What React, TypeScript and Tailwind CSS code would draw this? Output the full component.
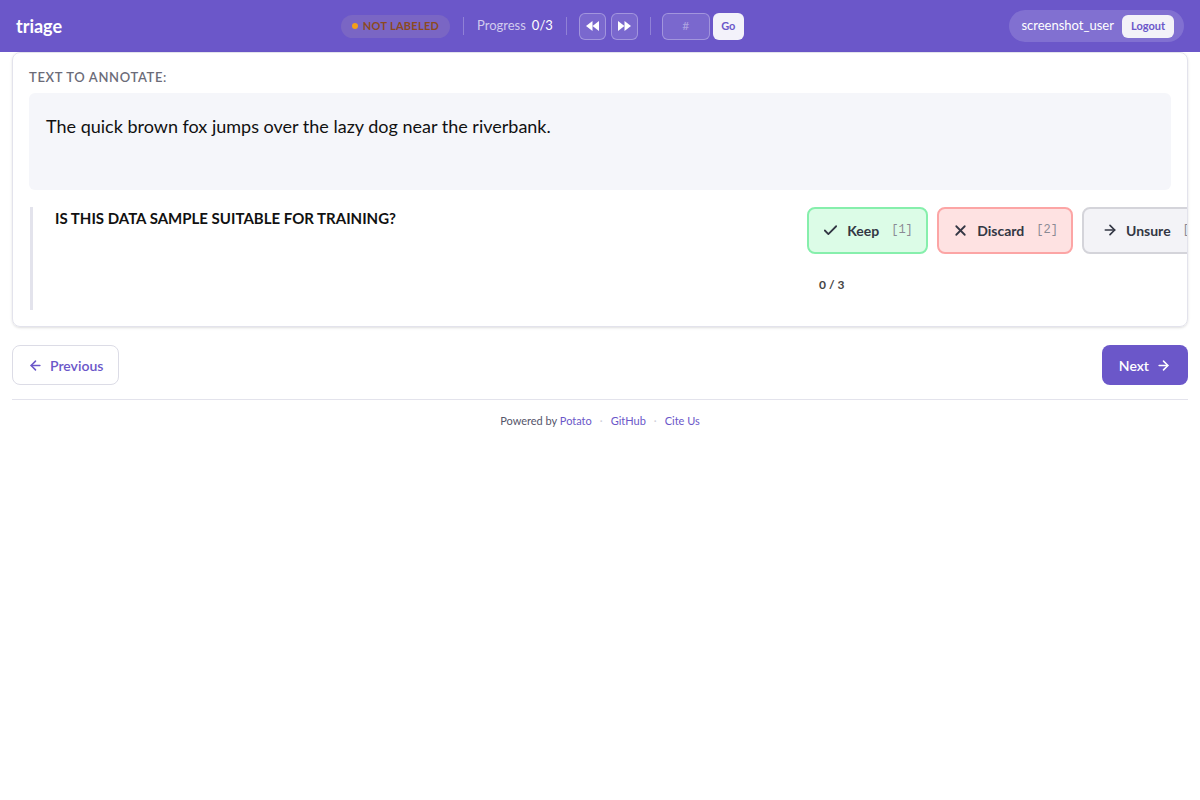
import { ArrowLeft, ArrowRight, Check, X } from "lucide-react";

const font = { fontFamily: "Lato, 'Noto Sans', sans-serif" };

// ícones de retroceder/avançar preenchidos
const Rewind = () => (
  <svg width="13" height="10" viewBox="0 0 13 10" fill="white">
    <polygon points="6.5,0 6.5,10 0,5" />
    <polygon points="13,0 13,10 6.5,5" />
  </svg>
);

const Forward = () => (
  <svg width="13" height="10" viewBox="0 0 13 10" fill="white">
    <polygon points="0,0 0,10 6.5,5" />
    <polygon points="6.5,0 6.5,10 13,5" />
  </svg>
);

const App = () => {
  return (
    <div className="min-h-[800px] bg-white text-[#1f1f2e]" style={font}>
      {/* barra superior */}
      <header className="h-[52px] bg-[#6b57c9] flex items-center px-4">
        <div className="text-white font-bold text-[18px] w-[325px]">triage</div>
        <div className="flex items-center">
          <div className="h-[23px] w-[109px] justify-center rounded-full bg-[#7a66c4] flex items-center gap-[5px]">
            <span className="w-[6px] h-[6px] rounded-full bg-[#f5a01a]" />
            <span className="text-[11px] font-bold tracking-wide text-[#8c4a1e]">NOT LABELED</span>
          </div>
          <div className="w-px h-[18px] bg-white/25 mx-[13px]" />
          <span className="text-[13px] text-white/70">Progress</span>
          <span className="text-[13px] text-white ml-[6px]">0/3</span>
          <div className="w-px h-[18px] bg-white/25 ml-[13px] mr-[12px]" />
          <button className="w-[27px] h-[27px] rounded-md border border-white/30 bg-white/10 flex items-center justify-center">
            <Rewind />
          </button>
          <button className="w-[27px] h-[27px] ml-[5px] rounded-md border border-white/30 bg-white/10 flex items-center justify-center">
            <Forward />
          </button>
          <div className="w-px h-[18px] bg-white/25 ml-[12px] mr-[11px]" />
          <div className="w-[48px] h-[27px] rounded-md border border-white/30 bg-white/10 flex items-center justify-center text-[12px] text-white/40">
            #
          </div>
          <button className="w-[31px] h-[27px] ml-[3px] rounded-md bg-[#f3f2fa] text-[#6b57c9] text-[11px] font-bold">
            Go
          </button>
        </div>
        <div className="ml-auto h-[32px] rounded-full bg-white/15 flex items-center pl-[12px] pr-[10px] gap-[8px]">
          <span className="text-white text-[13px]">screenshot_user</span>
          <button className="h-[23px] px-[9px] rounded-md bg-[#f3f2f8] text-[#6b57c9] text-[11px] font-bold">
            Logout
          </button>
        </div>
      </header>

      <main className="px-3">
        {/* cartão de anotação */}
        <div className="border border-[#e3e3ec] rounded-lg shadow-sm overflow-hidden h-[275px]">
          <div className="pt-[15px] px-[16px]">
            <div className="text-[13px] tracking-wider text-[#6b6b78] font-semibold">TEXT TO ANNOTATE:</div>
            <div className="mt-[5px] h-[97px] bg-[#f5f6fa] rounded-md px-[17px] pt-[20px] text-[18px] text-[#111]">
              The quick brown fox jumps over the lazy dog near the riverbank.
            </div>
          </div>
          <div className="mt-[17px] ml-[17px] flex">
            <div className="shrink-0 border-l-[3px] border-[#e3e3ec] h-[103px] pl-[22px] w-[777px]">
              <div className="text-[15px] font-bold text-[#111]">IS THIS DATA SAMPLE SUITABLE FOR TRAINING?</div>
            </div>
            <div className="flex flex-col shrink-0">
              <div className="flex gap-[9px] whitespace-nowrap">
                <button className="shrink-0 h-[47px] w-[121px] rounded-lg border-2 border-[#86efac] bg-[#dcfce7] flex items-center justify-center gap-[8px] text-[14px] font-bold text-[#333744]">
                  <Check size={17} strokeWidth={2.5} />
                  Keep
                  <span className="font-mono font-normal text-[12px] text-[#8a8a94] ml-[4px]">[1]</span>
                </button>
                <button className="shrink-0 h-[47px] w-[136px] rounded-lg border-2 border-[#fca5a5] bg-[#fee2e2] flex items-center justify-center gap-[8px] text-[14px] font-bold text-[#333744]">
                  <X size={17} strokeWidth={2.5} />
                  Discard
                  <span className="font-mono font-normal text-[12px] text-[#8a8a94] ml-[4px]">[2]</span>
                </button>
                <button className="shrink-0 h-[47px] w-[130px] rounded-lg border-2 border-[#d4d4da] bg-[#f3f3f7] flex items-center justify-start pl-[18px] gap-[8px] text-[14px] font-bold text-[#333744]">
                  <ArrowRight size={16} strokeWidth={2.5} />
                  Unsure
                  <span className="font-mono font-normal text-[12px] text-[#8a8a94] ml-[4px]">[3]</span>
                </button>
              </div>
              <div className="mt-[22px] ml-[12px] text-[12px] font-bold text-[#444]">0 / 3</div>
            </div>
          </div>
        </div>

        {/* navegação */}
        <div className="flex justify-between mt-[18px]">
          <button className="h-[40px] px-[15px] rounded-lg border border-[#dcdce6] bg-white flex items-center gap-[7px] text-[14px] font-semibold text-[#6b57c9]">
            <ArrowLeft size={15} strokeWidth={2.5} />
            Previous
          </button>
          <button className="h-[40px] px-[17px] rounded-lg bg-[#6b57c9] flex items-center gap-[7px] text-[14px] font-semibold text-white">
            Next
            <ArrowRight size={15} strokeWidth={2.5} />
          </button>
        </div>

        <div className="mt-[14px] border-t border-[#e3e3ec] pt-[13px] flex justify-center items-center gap-[8px] text-[11px]">
          <span className="text-[#55556a]">
            Powered by <span className="text-[#6b57c9]">Potato</span>
          </span>
          <span className="text-[#d0d0da]">·</span>
          <span className="text-[#6b57c9]">GitHub</span>
          <span className="text-[#d0d0da]">·</span>
          <span className="text-[#6b57c9]">Cite Us</span>
        </div>
      </main>
    </div>
  );
};

export default App;
